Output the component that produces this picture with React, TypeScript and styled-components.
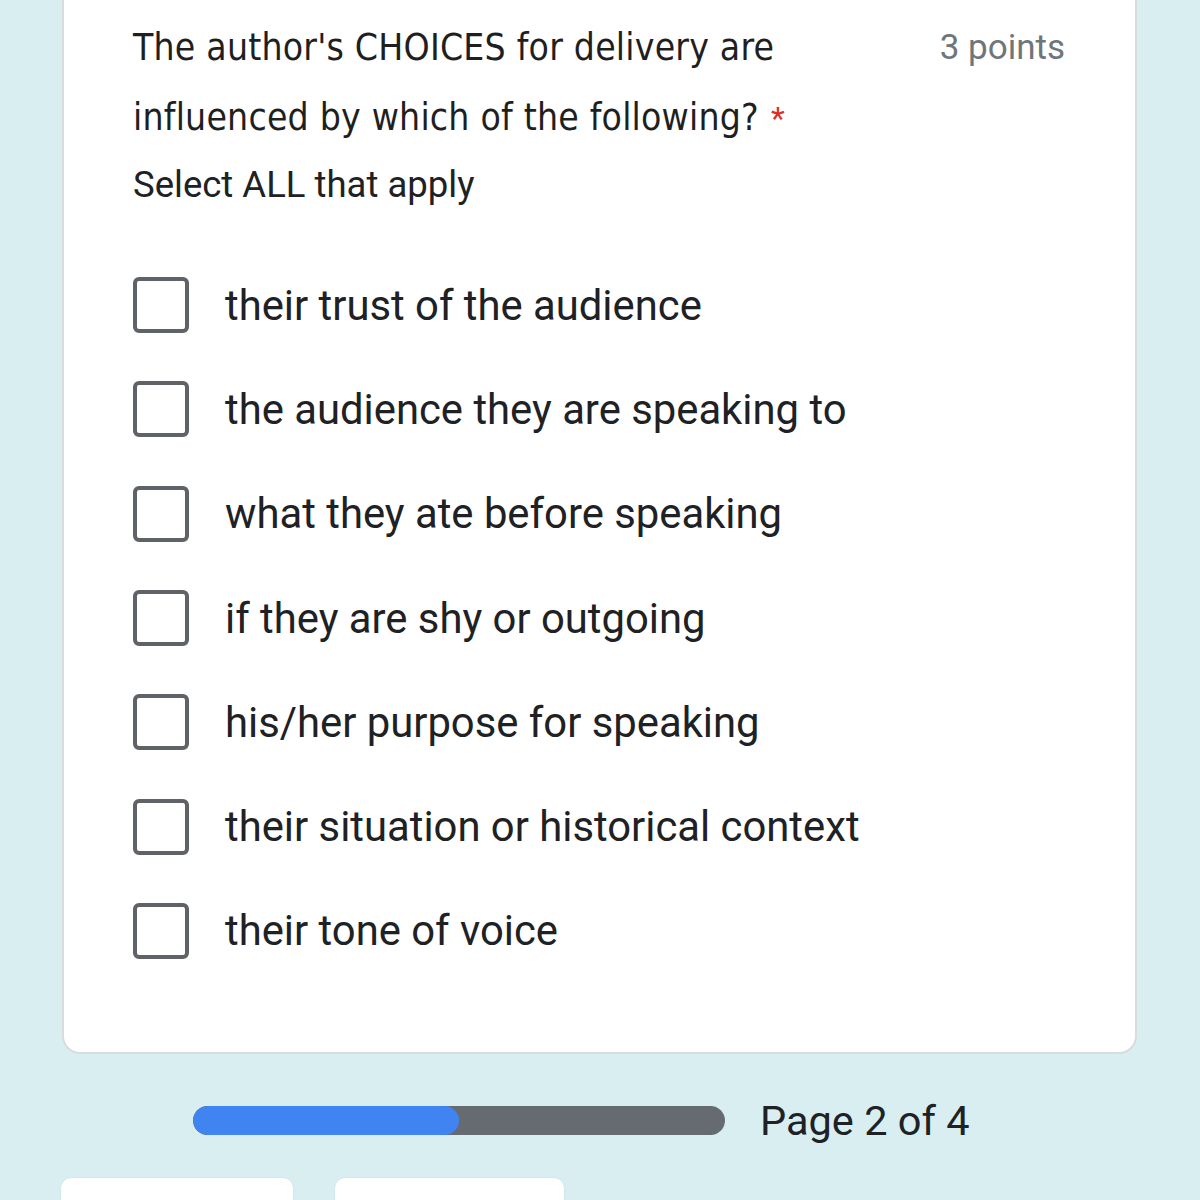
import React from "react";
import styled, { createGlobalStyle } from "styled-components";

const GlobalStyle = createGlobalStyle`
  html, body {
    margin: 0;
    padding: 0;
    background-color: #d8eef1;
  }
  body {
    width: 1200px;
    height: 1200px;
    overflow: hidden;
    font-family: Roboto, "Noto Sans", Arial, sans-serif;
  }
`;

const Page = styled.div`
  width: 1200px;
  display: flex;
  flex-direction: column;
`;

const Card = styled.div`
  margin-left: 62px;
  width: 1075px;
  box-sizing: border-box;
  background-color: #ffffff;
  border: 2px solid #d9dcdf;
  border-top: none;
  border-radius: 0 0 18px 18px;
  padding: 13px 70px 69px 69px;
`;

const Header = styled.div`
  display: flex;
  justify-content: space-between;
  align-items: flex-start;
`;

const Title = styled.h2`
  margin: 0;
  font-family: "Liberation Sans Narrow", "DejaVu Sans Condensed", "Open Sans", sans-serif;
  font-weight: 400;
  font-size: 37px;
  line-height: 70px;
  color: #1f1f1f;
  letter-spacing: 0.2px;
`;

const Required = styled.span`
  color: #d93025;
  font-family: Roboto, sans-serif;
  font-size: 32px;
  margin-left: 12px;
  vertical-align: top;
`;

const Points = styled.span`
  font-size: 35px;
  line-height: 70px;
  color: #70757a;
  white-space: nowrap;
`;

const Hint = styled.div`
  font-size: 36.5px;
  line-height: 40px;
  color: #202124;
  margin-top: 12px;
`;

const Options = styled.div`
  display: flex;
  flex-direction: column;
  margin-top: 48px;
`;

const Option = styled.label`
  display: flex;
  align-items: center;
  height: 104.3px;
  gap: 36px;
`;

const Box = styled.span`
  width: 56px;
  height: 56px;
  box-sizing: border-box;
  border: 4.5px solid #5f6368;
  border-radius: 6px;
  flex-shrink: 0;
`;

const OptionText = styled.span`
  font-size: 41.8px;
  color: #202124;
`;

const ProgressRow = styled.div`
  display: flex;
  align-items: center;
  gap: 35px;
  padding-left: 193px;
  margin-top: 46px;
  height: 40px;
`;

const Track = styled.div`
  width: 532px;
  height: 29px;
  border-radius: 15px;
  background-color: #666b71;
  overflow: hidden;
`;

const Fill = styled.div`
  height: 100%;
  border-radius: 15px;
  background-color: #3f84f1;
`;

const PageLabel = styled.span`
  font-size: 41.5px;
  color: #202124;
`;

const Buttons = styled.div`
  display: flex;
  gap: 42px;
  padding-left: 61px;
  margin-top: 38px;
`;

const NavButton = styled.div<{ w: number }>`
  width: ${(p) => p.w}px;
  height: 60px;
  background-color: #ffffff;
  border-radius: 10px;
  box-shadow: 0 0 2px rgba(0, 0, 0, 0.08);
`;

const choices = [
  "their trust of the audience",
  "the audience they are speaking to",
  "what they ate before speaking",
  "if they are shy or outgoing",
  "his/her purpose for speaking",
  "their situation or historical context",
  "their tone of voice",
];

export default function App() {
  const page = 2;
  const total = 4;
  return (
    <>
      <GlobalStyle />
      <Page>
        <Card>
          <Header>
            <Title>
              The author's CHOICES for delivery are
              <br />
              influenced by which of the following?
              <Required>*</Required>
            </Title>
            <Points>3 points</Points>
          </Header>
          <Hint>Select ALL that apply</Hint>
          <Options>
            {choices.map((c) => (
              <Option key={c}>
                <Box />
                <OptionText>{c}</OptionText>
              </Option>
            ))}
          </Options>
        </Card>
        <ProgressRow>
          <Track>
            <Fill style={{ width: `${(page / total) * 100}%` }} />
          </Track>
          <PageLabel>
            Page {page} of {total}
          </PageLabel>
        </ProgressRow>
        <Buttons>
          <NavButton w={232} />
          <NavButton w={229} />
        </Buttons>
      </Page>
    </>
  );
}
